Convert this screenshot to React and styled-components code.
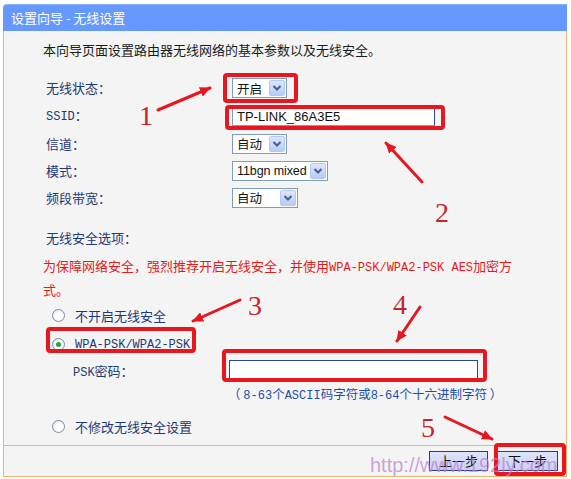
import styled, { createGlobalStyle } from "styled-components";

const GlobalStyle = createGlobalStyle`
  html, body {
    margin: 0;
    padding: 0;
    background: #fff;
  }
  body {
    font-family: "Noto Sans CJK SC", "Liberation Sans", sans-serif;
  }
`;

const Page = styled.div`
  position: relative;
  width: 571px;
  height: 479px;
  overflow: hidden;
  padding: 4px 0 0 3px;
  box-sizing: border-box;
`;

const Frame = styled.div`
  width: 564px;
`;

const Header = styled.div`
  height: 27px;
  box-sizing: border-box;
  background: #6699ff;
  border-top: 1px solid #89b0ff;
  border-radius: 4px 0 0 0;
  color: #fff;
  font-size: 13px;
  line-height: 25px;
  padding-left: 8px;
`;

const Body = styled.div`
  height: 414px;
  box-sizing: border-box;
  background: #f4f4f4;
  border-left: 1px solid #efb374;
  border-right: 1px solid #efb374;
  padding: 10px 0 0 39px;
  font-size: 13px;
`;

const Mono = styled.span`
  font-family: "Liberation Mono", monospace;
  font-size: 12px;
`;

const Intro = styled.div`
  line-height: 18px;
  color: #1b1b1b;
`;

const FormGrid = styled.div`
  display: grid;
  grid-template-columns: 186px auto;
  grid-template-rows: 28px 28px 27px 27px 27px;
  align-items: center;
  margin: 15px 0 0 3px;
`;

const Label = styled.div`
  color: #1d3a75;
  line-height: 18px;
`;

const SelectBox = styled.div`
  display: flex;
  align-items: center;
  justify-content: space-between;
  width: ${p => p.$w}px;
  height: 20px;
  box-sizing: border-box;
  border: 1px solid #7f9db9;
  background: #fff;
  font-family: "Liberation Sans", "Noto Sans CJK SC", sans-serif;
  font-size: 12.5px;
  letter-spacing: -0.1px;
  color: #111;
  white-space: nowrap;
  padding-left: 4px;
`;

const DropButton = styled.span`
  display: flex;
  align-items: center;
  justify-content: center;
  flex-shrink: 0;
  width: 16px;
  height: 16px;
  margin-right: 1px;
  box-sizing: border-box;
  border: 1px solid #b6c8f2;
  border-radius: 2px;
  background: linear-gradient(#dde7fe, #b8cbf7);
`;

const TextInput = styled.input`
  width: ${p => p.$w}px;
  height: 20px;
  box-sizing: border-box;
  border: 1px solid ${p => p.$dark ? "#2b4796" : "#7f9db9"};
  border-right-color: #2b4796;
  background: #fff;
  font-family: "Liberation Sans", sans-serif;
  font-size: 13px;
  color: #111;
  padding: 0 4px;
  margin: 0;
  outline: none;
`;

const SectionTitle = styled.div`
  margin: 18px 0 0 3px;
  line-height: 18px;
  color: #1d3a75;
`;

const Warning = styled.div`
  margin-top: 8px;
  max-width: 478px;
  line-height: 21px;
  color: #e31b1b;
`;

const Options = styled.div`
  display: flex;
  flex-direction: column;
  margin-top: 1px;
`;

const RadioRow = styled.label`
  display: flex;
  align-items: center;
  height: ${p => p.$h || 29}px;
  margin-top: ${p => p.$mt || 0}px;
  padding-left: 9px;
  color: #1d3a75;
`;

const Radio = styled.span`
  display: inline-flex;
  align-items: center;
  justify-content: center;
  width: 13px;
  height: 13px;
  margin-right: 10px;
  box-sizing: border-box;
  border-radius: 50%;
  border: 1px solid #7b8ca6;
  background: radial-gradient(circle at 60% 60%, #fff 35%, #d9dde6 100%);

  &::after {
    content: "";
    width: 5px;
    height: 5px;
    border-radius: 50%;
    background: ${p => p.$checked ? "#27a33a" : "transparent"};
  }
`;

const PskRow = styled.div`
  display: grid;
  grid-template-columns: 156px auto;
  align-items: center;
  height: 22px;
  margin-left: 30px;
  color: #1d3a75;
`;

const Hint = styled.div`
  margin: 4px 0 0 185px;
  line-height: 18px;
  font-size: 12.5px;
  color: #1f4fa5;
`;

const Footer = styled.div`
  display: flex;
  justify-content: flex-end;
  align-items: center;
  gap: 9px;
  height: 32px;
  box-sizing: border-box;
  padding-right: 8px;
  background: #f4f4f4;
  border: 1px solid #efb374;
`;

const Button = styled.button`
  height: 20px;
  padding: 0 ${p => p.$pad}px;
  margin: 0;
  box-sizing: border-box;
  border: 1px solid #2a3b8a;
  background: linear-gradient(#dfe3fa, #c9d0f2);
  font-family: "Noto Sans CJK SC", sans-serif;
  font-size: 13px;
  line-height: 18px;
  color: #111;
`;

const Overlay = styled.svg`
  position: absolute;
  left: 0;
  top: 0;
  pointer-events: none;
`;

const Watermark = styled.div`
  position: absolute;
  left: 370px;
  top: 455px;
  font-family: "Liberation Sans", sans-serif;
  font-size: 20px;
  line-height: 20px;
  color: rgba(185, 130, 205, 0.72);
  pointer-events: none;
`;

function Select({ width, value }) {
  return (
    <SelectBox $w={width}>
      <span>{value}</span>
      <DropButton>
        <svg width="10" height="8" viewBox="0 0 10 8">
          <path d="M1.5 2 L5 5.5 L8.5 2" fill="none" stroke="#4a5f88" strokeWidth="2" />
        </svg>
      </DropButton>
    </SelectBox>
  );
}

const RED = "#e8161e";

function Annotations() {
  const arrows = [
    [158, 110, 210, 88],
    [422, 182, 386, 143],
    [240, 300, 193, 321],
    [420, 307, 397, 341],
    [445, 417, 492, 439],
  ];
  const boxes = [
    [225, 75, 71, 26],
    [227, 107, 216, 21],
    [48, 329, 146, 22],
    [224, 351, 261, 29],
    [496, 445, 68, 29],
  ];
  const numbers = [
    ["1", 139, 125],
    ["2", 435, 222],
    ["3", 248, 315],
    ["4", 393, 314],
    ["5", 421, 437],
  ];
  return (
    <Overlay width="571" height="479" viewBox="0 0 571 479">
      <defs>
        <marker id="head" markerUnits="userSpaceOnUse" markerWidth="12" markerHeight="10"
          refX="10" refY="5" orient="auto">
          <path d="M0 0 L11 5 L0 10 Z" fill={RED} />
        </marker>
      </defs>
      {boxes.map(([x, y, w, h], i) => (
        <rect key={i} x={x} y={y} width={w} height={h} rx="2"
          fill="none" stroke={RED} strokeWidth="4" />
      ))}
      {arrows.map(([x1, y1, x2, y2], i) => (
        <line key={i} x1={x1} y1={y1} x2={x2} y2={y2}
          stroke={RED} strokeWidth="3" strokeLinecap="round" markerEnd="url(#head)" />
      ))}
      {numbers.map(([n, x, y]) => (
        <text key={n} x={x} y={y} fill="#c4262b"
          fontFamily="Liberation Serif, serif" fontSize="28">{n}</text>
      ))}
    </Overlay>
  );
}

export default function App() {
  return (
    <>
      <GlobalStyle />
      <Page>
        <Frame>
          <Header>设置向导 - 无线设置</Header>
          <Body>
            <Intro>本向导页面设置路由器无线网络的基本参数以及无线安全。</Intro>

            <FormGrid>
              <Label>无线状态：</Label>
              <Select width={55} value="开启" />
              <Label><Mono>SSID</Mono>：</Label>
              <TextInput $w={203} defaultValue="TP-LINK_86A3E5" readOnly />
              <Label>信道：</Label>
              <Select width={55} value="自动" />
              <Label>模式：</Label>
              <Select width={96} value="11bgn mixed" />
              <Label>频段带宽：</Label>
              <Select width={66} value="自动" />
            </FormGrid>

            <SectionTitle>无线安全选项：</SectionTitle>
            <Warning>
              为保障网络安全，强烈推荐开启无线安全，并使用<Mono>WPA-PSK/WPA2-PSK AES</Mono>加密方式。
            </Warning>

            <Options>
              <RadioRow><Radio />不开启无线安全</RadioRow>
              <RadioRow><Radio $checked /><Mono>WPA-PSK/WPA2-PSK</Mono></RadioRow>
              <PskRow>
                <span><Mono>PSK</Mono>密码：</span>
                <TextInput $w={249} $dark readOnly />
              </PskRow>
              <Hint>（ <Mono>8-63</Mono>个<Mono>ASCII</Mono>码字符或<Mono>8-64</Mono>个十六进制字符 ）</Hint>
              <RadioRow $h={28} $mt={7}><Radio />不修改无线安全设置</RadioRow>
            </Options>
          </Body>
          <Footer>
            <Button $pad={9}>上一步</Button>
            <Button $pad={10}>下一步</Button>
          </Footer>
        </Frame>
        <Annotations />
        <Watermark>http://www.192ly.com</Watermark>
      </Page>
    </>
  );
}
